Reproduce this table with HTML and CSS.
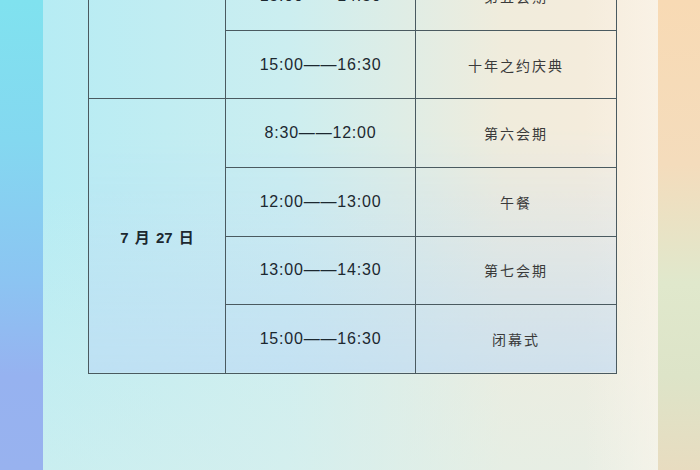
FILE: index.html
```html
<!DOCTYPE html>
<html lang="zh">
<head>
<meta charset="utf-8">
<link rel="stylesheet" href="styles.css">
</head>
<body>
<div class="page">
  <div class="strip strip-left"></div>
  <div class="panel">
    <table class="schedule">
      <colgroup>
        <col class="c-date"><col class="c-time"><col class="c-event">
      </colgroup>
      <tbody>
        <tr>
          <td class="date" rowspan="4">7 月 26 日</td>
          <td class="time">8:30——10:00</td>
          <td class="event">第三会期</td>
        </tr>
        <tr>
          <td class="time">10:30——12:00</td>
          <td class="event">第四会期</td>
        </tr>
        <tr>
          <td class="time">13:00——14:30</td>
          <td class="event">第五会期</td>
        </tr>
        <tr>
          <td class="time">15:00——16:30</td>
          <td class="event">十年之约庆典</td>
        </tr>
        <tr>
          <td class="date" rowspan="4">7 月 27 日</td>
          <td class="time">8:30——12:00</td>
          <td class="event">第六会期</td>
        </tr>
        <tr>
          <td class="time">12:00——13:00</td>
          <td class="event">午餐</td>
        </tr>
        <tr>
          <td class="time">13:00——14:30</td>
          <td class="event">第七会期</td>
        </tr>
        <tr>
          <td class="time">15:00——16:30</td>
          <td class="event">闭幕式</td>
        </tr>
      </tbody>
    </table>
  </div>
  <div class="strip strip-right"></div>
</div>
</body>
</html>
```

FILE: styles.css
```css
html, body {
  margin: 0;
  padding: 0;
}
body {
  width: 700px;
  height: 470px;
  overflow: hidden;
  font-family: "Liberation Sans", "Noto Sans CJK SC", sans-serif;
}
.page {
  display: flex;
  width: 700px;
  height: 470px;
  overflow: hidden;
}
.strip {
  flex: none;
  height: 100%;
}
.strip-left {
  width: 43px;
  background: linear-gradient(180deg, #80e2ef 0%, #84d8f0 30%, #8cc4f2 60%, #96b2f0 80%, #98b2ef 100%);
}
.strip-right {
  width: 42px;
  background: linear-gradient(180deg, #f8dab4 0%, #f4dcbc 35%, #e0e8cc 60%, #dde4c8 80%, #e8dcc0 100%);
}
.panel {
  flex: 1;
  height: 100%;
  overflow: hidden;
  background:
    linear-gradient(90deg, rgba(255,255,255,0) 0%, rgba(255,255,255,0) 88%, rgba(250,246,236,0.6) 100%),
    linear-gradient(180deg, rgba(255,255,255,0) 40%, rgba(220,240,236,0.5) 100%),
    linear-gradient(90deg, #b6ecf4 0%, #cceef0 40%, #f0ecdc 75%, #f8ecdc 100%);
}
.schedule {
  margin-top: -176px;
  margin-left: 45px;
  width: 528px;
  border-collapse: collapse;
  table-layout: fixed;
  background:
    linear-gradient(180deg, rgba(255,255,255,0) 0%, rgba(190,210,245,0.0) 55%, rgba(184,214,246,0.55) 100%);
}
.c-date { width: 137px; }
.c-time { width: 190px; }
.c-event { width: 201px; }
.schedule td {
  border: 1.5px solid #4a5a60;
  height: 67.6px;
  padding: 0;
  text-align: center;
  vertical-align: middle;
}
.time {
  font-family: "Liberation Sans", sans-serif;
  font-size: 16px;
  letter-spacing: 0.8px;
  color: #1c2830;
}
.event {
  font-family: "Noto Sans CJK SC", sans-serif;
  font-size: 14px;
  letter-spacing: 2px;
  color: #3a3a3a;
}
.date {
  font-family: "Liberation Sans", "Noto Sans CJK SC", sans-serif;
  font-size: 15px;
  font-weight: bold;
  word-spacing: 2px;
  color: #1c2830;
}
```
